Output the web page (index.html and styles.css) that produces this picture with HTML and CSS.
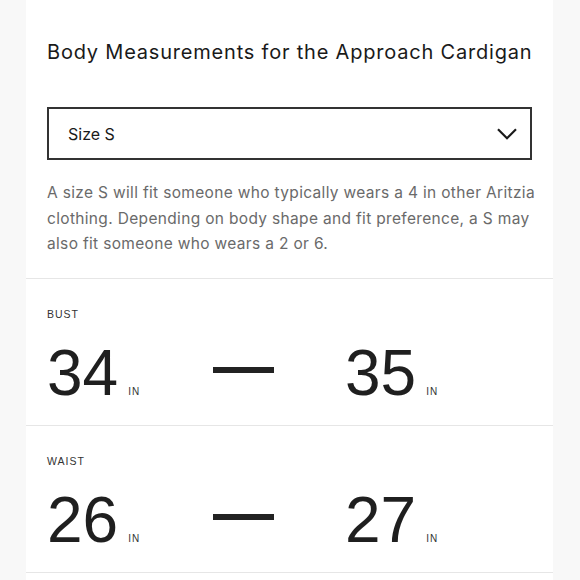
FILE: index.html
```html
<!DOCTYPE html>
<html lang="en">
<head>
<meta charset="utf-8">
<title>Body Measurements</title>
<link rel="stylesheet" href="styles.css">
</head>
<body>
<div class="card">
  <div class="intro">
    <h1 class="title">Body Measurements for the Approach Cardigan</h1>
    <div class="select">
      <span class="select-label">Size S</span>
      <svg class="chevron" width="20" height="12" viewBox="0 0 20 12" aria-hidden="true">
        <polyline points="1,1.2 10,10.2 19,1.2" fill="none" stroke="#1a1a1a" stroke-width="2.2"/>
      </svg>
    </div>
    <p class="desc">A size S will fit someone who typically wears a 4 in other Aritzia<br>clothing. Depending on body shape and fit preference, a S may<br>also fit someone who wears a 2 or 6.</p>
  </div>
  <div class="measure">
    <div class="label">BUST</div>
    <div class="range">
      <div class="value"><span class="num">34</span><span class="unit">IN</span></div>
      <div class="dash"></div>
      <div class="value"><span class="num">35</span><span class="unit">IN</span></div>
    </div>
  </div>
  <div class="measure">
    <div class="label">WAIST</div>
    <div class="range">
      <div class="value"><span class="num">26</span><span class="unit">IN</span></div>
      <div class="dash"></div>
      <div class="value"><span class="num">27</span><span class="unit">IN</span></div>
    </div>
  </div>
</div>
</body>
</html>
```
FILE: styles.css
```css
html, body {
  margin: 0;
  padding: 0;
}
body {
  background: #f8f8f8;
  font-family: Inter, "Liberation Sans", sans-serif;
  color: #1a1a1a;
  height: 580px;
  overflow: hidden;
}
.card {
  margin: 0 27px 0 26px;
  background: #fff;
  min-height: 580px;
}
.intro {
  padding: 40px 21px 21px;
  border-bottom: 1px solid #e6e6e6;
}
.title {
  margin: 0;
  font-size: 20px;
  line-height: 24px;
  letter-spacing: 0.8px;
  font-weight: 400;
  color: #1a1a1a;
  white-space: nowrap;
}
.select {
  margin-top: 43px;
  height: 53px;
  box-sizing: border-box;
  border: 2px solid #333;
  display: flex;
  align-items: center;
  justify-content: space-between;
  padding: 0 13px 0 19px;
}
.select-label {
  font-size: 16px;
  color: #1a1a1a;
}
.chevron {
  display: block;
}
.desc {
  margin: 20px 0 0;
  font-size: 15.5px;
  line-height: 25.5px;
  letter-spacing: 0.33px;
  color: #6a6a6a;
  white-space: nowrap;
}
.measure {
  padding: 28px 21px 20px;
  border-bottom: 1px solid #e6e6e6;
}
.label {
  font-family: "Liberation Sans", Arial, sans-serif;
  font-size: 10.5px;
  line-height: 14px;
  letter-spacing: 1px;
  color: #333;
}
.range {
  margin-top: 20px;
  display: flex;
  align-items: center;
}
.value {
  display: flex;
  align-items: baseline;
}
.value:first-child {
  width: 166px;
}
.num {
  font-family: "Liberation Sans", Arial, sans-serif;
  font-size: 64px;
  line-height: 64px;
  color: #1f1f1f;
}
.unit {
  margin-left: 10px;
  font-family: "Liberation Sans", Arial, sans-serif;
  font-size: 10px;
  letter-spacing: 1px;
  color: #333;
}
.dash {
  width: 61px;
  height: 6px;
  background: #222;
  margin: 0 71px 5px 0;
}
```
